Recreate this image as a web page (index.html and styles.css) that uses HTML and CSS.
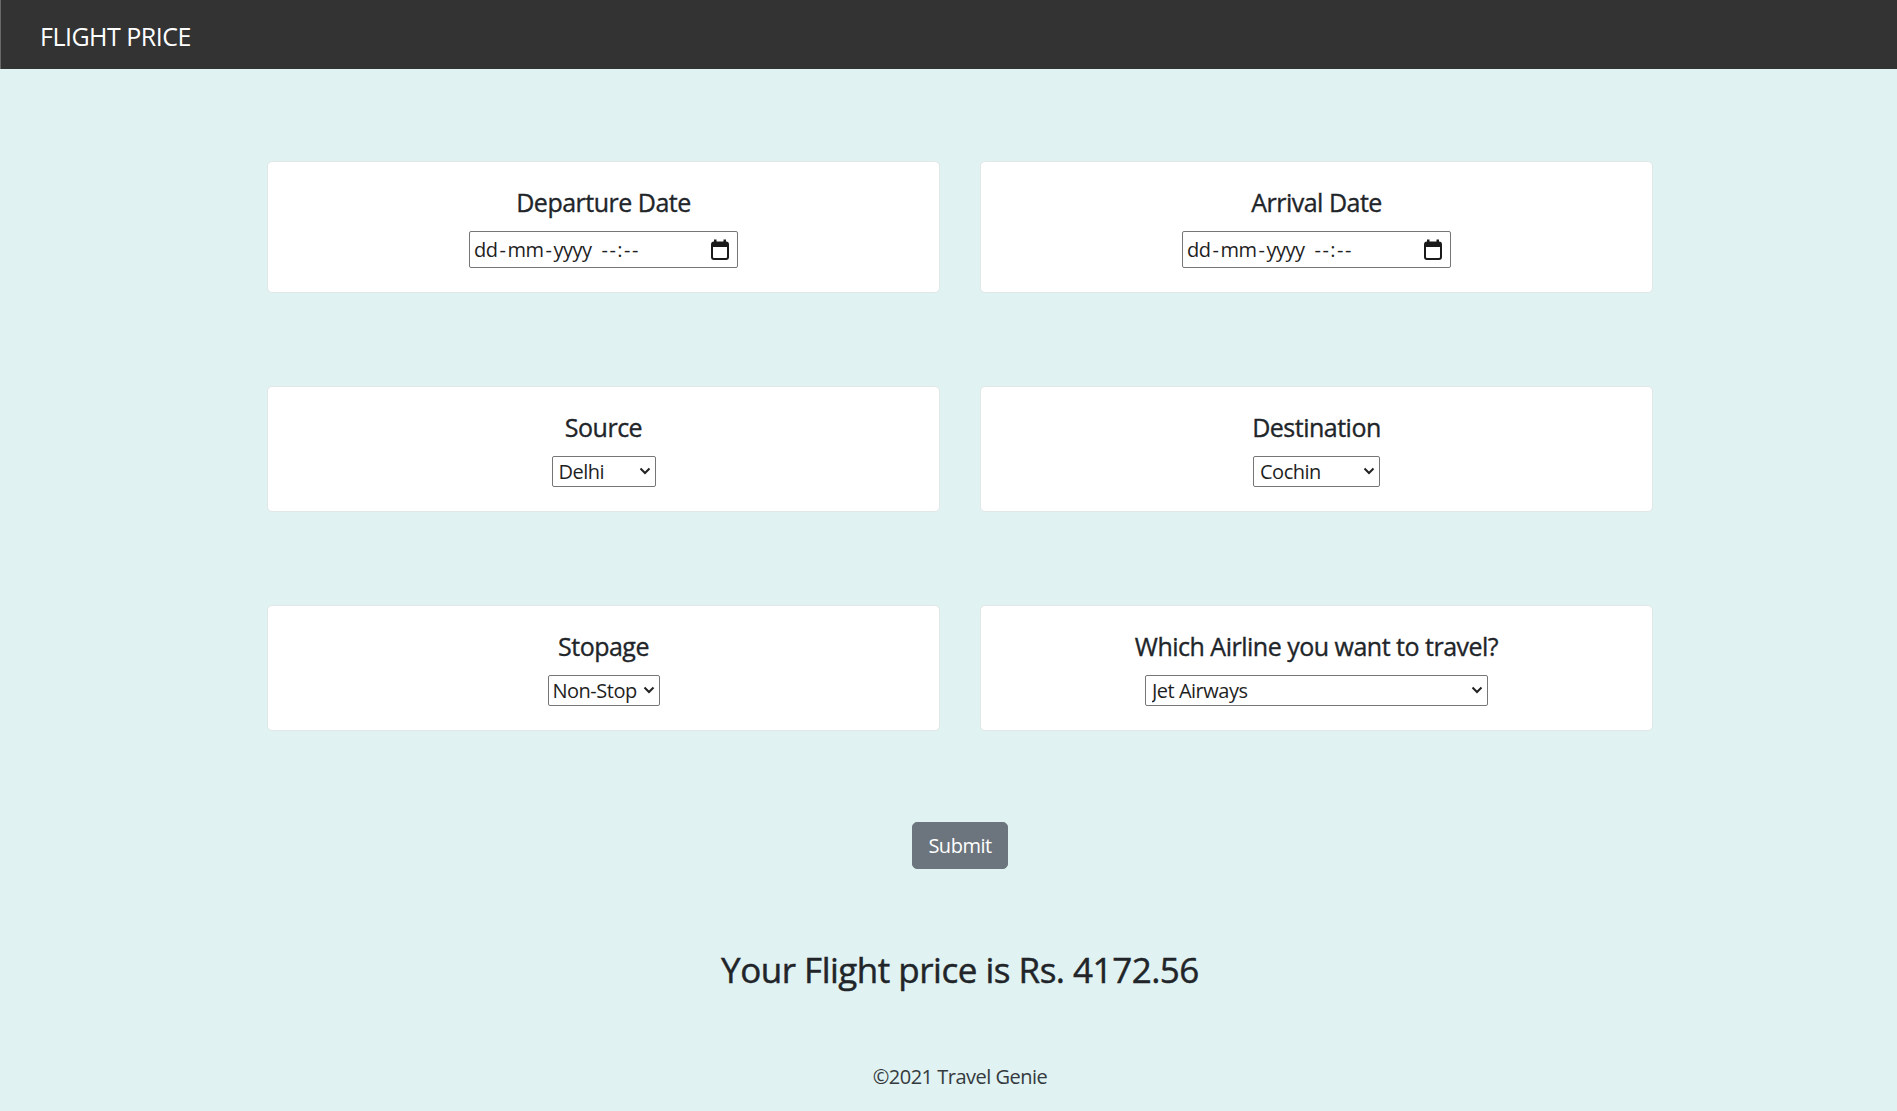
FILE: index.html
```html
<!DOCTYPE html>
<html lang="en">
<head>
<meta charset="utf-8">
<title>Flight Price</title>
<link rel="stylesheet" href="styles.css">
</head>
<body>
<header class="navbar">
  <span class="brand">FLIGHT PRICE</span>
</header>
<main class="page">
  <div class="container">
    <form class="form-grid">
      <div class="card">
        <h5 class="card-title">Departure Date</h5>
        <div class="date-field">
          <span class="date-text">dd<span class="sep">-</span>mm<span class="sep">-</span>yyyy</span>
          <span class="time-text">--:--</span>
          <svg class="cal-icon" width="18" height="21" viewBox="0 0 18 21"><rect x="1" y="3.5" width="16" height="16.5" rx="2" fill="none" stroke="#1a1a1a" stroke-width="2"/><rect x="1" y="3.5" width="16" height="4.5" fill="#1a1a1a"/><rect x="3" y="0.5" width="2.5" height="4" fill="#1a1a1a"/><rect x="12.5" y="0.5" width="2.5" height="4" fill="#1a1a1a"/></svg>
        </div>
      </div>
      <div class="card">
        <h5 class="card-title">Arrival Date</h5>
        <div class="date-field">
          <span class="date-text">dd<span class="sep">-</span>mm<span class="sep">-</span>yyyy</span>
          <span class="time-text">--:--</span>
          <svg class="cal-icon" width="18" height="21" viewBox="0 0 18 21"><rect x="1" y="3.5" width="16" height="16.5" rx="2" fill="none" stroke="#1a1a1a" stroke-width="2"/><rect x="1" y="3.5" width="16" height="4.5" fill="#1a1a1a"/><rect x="3" y="0.5" width="2.5" height="4" fill="#1a1a1a"/><rect x="12.5" y="0.5" width="2.5" height="4" fill="#1a1a1a"/></svg>
        </div>
      </div>
      <div class="card">
        <h5 class="card-title">Source</h5>
        <span class="select-wrap">
          <select class="select sel-source">
            <option>Delhi</option><option>Kolkata</option><option>Mumbai</option><option>Chennai</option>
          </select>
          <svg class="chev" width="12" height="8" viewBox="0 0 12 8"><path d="M1.5 1.5l4.5 4.5 4.5-4.5" fill="none" stroke="#222" stroke-width="2"/></svg>
        </span>
      </div>
      <div class="card">
        <h5 class="card-title">Destination</h5>
        <span class="select-wrap">
          <select class="select sel-dest">
            <option>Cochin</option><option>Delhi</option><option>New Delhi</option><option>Hyderabad</option><option>Kolkata</option>
          </select>
          <svg class="chev" width="12" height="8" viewBox="0 0 12 8"><path d="M1.5 1.5l4.5 4.5 4.5-4.5" fill="none" stroke="#222" stroke-width="2"/></svg>
        </span>
      </div>
      <div class="card">
        <h5 class="card-title">Stopage</h5>
        <span class="select-wrap">
          <select class="select sel-stop">
            <option>Non-Stop</option><option>1</option><option>2</option><option>3</option><option>4</option>
          </select>
          <svg class="chev" width="12" height="8" viewBox="0 0 12 8"><path d="M1.5 1.5l4.5 4.5 4.5-4.5" fill="none" stroke="#222" stroke-width="2"/></svg>
        </span>
      </div>
      <div class="card">
        <h5 class="card-title">Which Airline you want to travel?</h5>
        <span class="select-wrap">
          <select class="select sel-airline">
            <option>Jet Airways</option><option>IndiGo</option><option>Air India</option><option>SpiceJet</option><option>Multiple carriers</option><option>GoAir</option><option>Vistara</option><option>Air Asia</option>
          </select>
          <svg class="chev" width="12" height="8" viewBox="0 0 12 8"><path d="M1.5 1.5l4.5 4.5 4.5-4.5" fill="none" stroke="#222" stroke-width="2"/></svg>
        </span>
      </div>
    </form>
    <div class="actions">
      <button class="btn-submit" type="button">Submit</button>
    </div>
    <h3 class="result">Your Flight price is Rs. 4172.56</h3>
  </div>
</main>
<footer class="footer">©2021 Travel Genie</footer>
</body>
</html>
```
FILE: styles.css
```css
* { box-sizing: border-box; }

html, body {
  margin: 0;
  padding: 0;
}

body {
  background: #e0f2f1;
  color: #212529;
  font-family: "Open Sans", "Noto Sans", sans-serif;
  font-size: 20px;
  line-height: 1.5;
  letter-spacing: -0.025em;
}

.navbar {
  height: 69px;
  background: #333333;
  border-left: 1px solid #6a6a6a;
  display: flex;
  align-items: center;
  padding-left: 39px;
}

.brand {
  color: #ffffff;
  font-size: 25px;
  line-height: 30px;
  padding-top: 2px;
}

.page {
  padding-left: 23px;
}

.container {
  width: 1386px;
  margin: 0 auto;
}

.form-grid {
  display: grid;
  grid-template-columns: 1fr 1fr;
  column-gap: 40px;
  row-gap: 93px;
  margin: 92px 0 0;
}

.card {
  background: #ffffff;
  border: 1px solid #e1e6e6;
  border-radius: 5px;
  padding: 25px 20px 24px;
  text-align: center;
}

.card-title {
  margin: 0 0 14px;
  font-size: 25px;
  line-height: 30px;
  font-weight: 500;
  -webkit-text-stroke: 0.35px currentColor;
}

.date-field {
  display: inline-flex;
  align-items: center;
  width: 269px;
  height: 37px;
  border: 1px solid #767676;
  border-radius: 2px;
  background: #fff;
  padding: 0 8px 0 4px;
  font-size: 20px;
  color: #1f1f1f;
  text-align: left;
}

.date-text .sep {
  margin: 0 2px;
}

.time-text {
  margin-left: 10px;
  letter-spacing: 1.5px;
}

.cal-icon {
  margin-left: auto;
  flex: none;
}

.select-wrap {
  position: relative;
  display: inline-block;
  vertical-align: top;
}

.select {
  -webkit-appearance: none;
  appearance: none;
  display: block;
  height: 31px;
  border: 1px solid #767676;
  border-radius: 2px;
  background: #fff;
  color: #1f1f1f;
  font-family: inherit;
  font-size: 20px;
  letter-spacing: -0.025em;
  line-height: 27px;
  padding: 0 20px 0 6px;
  margin: 0;
}

.sel-source { width: 104px; }
.sel-dest { width: 127px; }
.sel-stop { width: 112px; padding-left: 4px; }
.sel-airline { width: 343px; }

.chev {
  position: absolute;
  right: 5px;
  top: 11px;
  pointer-events: none;
}

.actions {
  display: flex;
  justify-content: center;
  margin-top: 91px;
}

.btn-submit {
  height: 47px;
  width: 96px;
  padding: 0;
  background: #6c757d;
  border: 1px solid #6c757d;
  border-radius: 5px;
  color: #ffffff;
  font-family: inherit;
  font-size: 20px;
  letter-spacing: -0.025em;
}

.result {
  margin: 80px 0 0;
  text-align: center;
  font-size: 35px;
  line-height: 42px;
  font-weight: 500;
  -webkit-text-stroke: 0.45px currentColor;
}

.footer {
  margin-top: 71px;
  padding-left: 23px;
  text-align: center;
  font-size: 20px;
  line-height: 30px;
  color: #343a40;
}
```
